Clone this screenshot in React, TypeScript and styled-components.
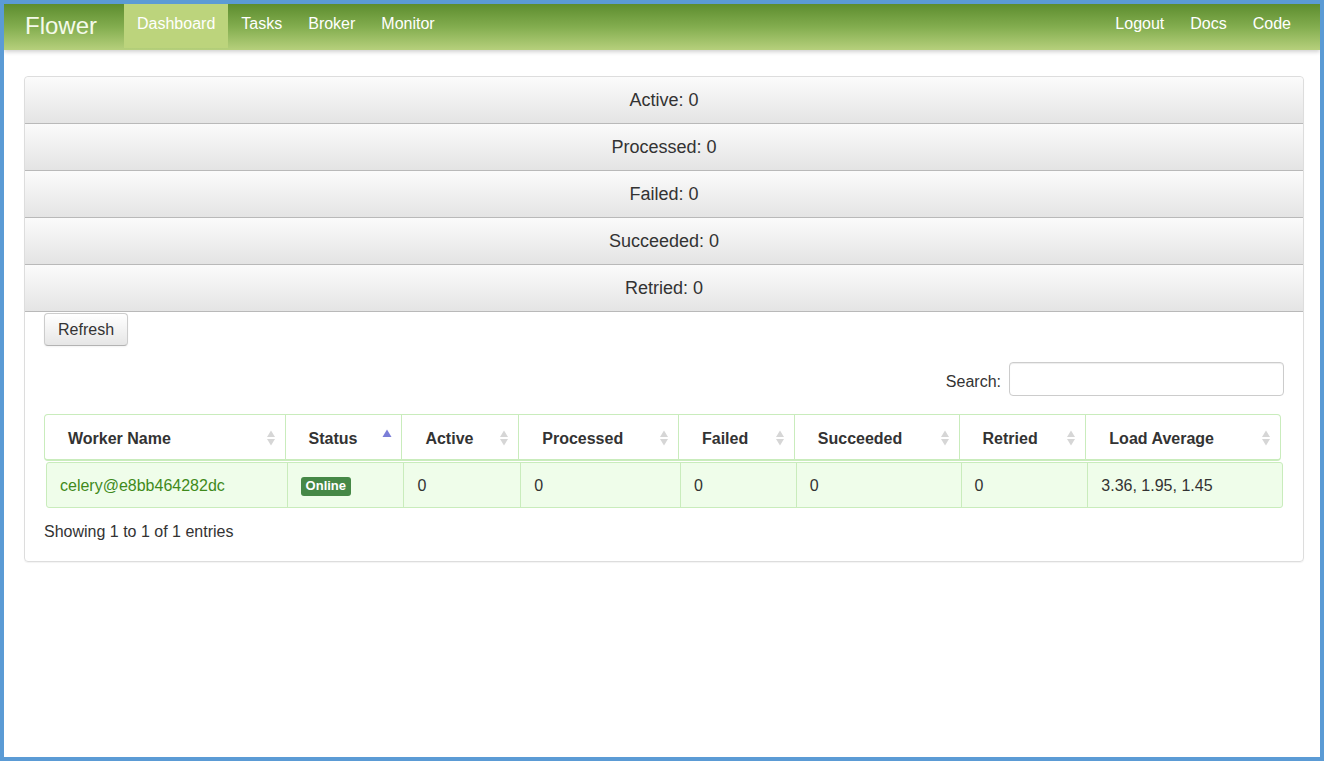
import React from "react";
import styled, { createGlobalStyle } from "styled-components";

const GlobalStyle = createGlobalStyle`
    html, body {
        margin: 0;
        padding: 0;
        background: #ffffff;
        font-family: "Liberation Sans", Arial, sans-serif;
        color: #333333;
    }
`;

interface IStat {
    label: string;
    value: number;
}

interface IColumn {
    title: string;
    width: number;
    sorted?: boolean;
}

const stats: IStat[] = [
    { label: "Active", value: 0 },
    { label: "Processed", value: 0 },
    { label: "Failed", value: 0 },
    { label: "Succeeded", value: 0 },
    { label: "Retried", value: 0 },
];

const columns: IColumn[] = [
    { title: "Worker Name", width: 241 },
    { title: "Status", width: 117, sorted: true },
    { title: "Active", width: 117 },
    { title: "Processed", width: 160 },
    { title: "Failed", width: 116 },
    { title: "Succeeded", width: 165 },
    { title: "Retried", width: 127 },
    { title: "Load Average", width: 194 },
];

const SortIcon: React.FC<{ sorted?: boolean }> = ({ sorted }) => {
    if (sorted) {
        return (
            <SortSvg width="10" height="20" viewBox="0 0 10 20">
                <path d="M0.5 9 L5 1.5 L9.5 9 Z" fill="#7b7ed8" />
            </SortSvg>
        );
    }
    return (
        <SortSvg width="10" height="20" viewBox="0 0 10 20">
            <path d="M1 9 L5 2.5 L9 9 Z" fill="#d6d6d6" />
            <path d="M1 11 L5 17.5 L9 11 Z" fill="#d6d6d6" />
        </SortSvg>
    );
};

const App: React.FC = () => {
    return (
        <>
            <GlobalStyle />
            <Frame>
                <NavBar>
                    <NavLeft>
                        <Brand>Flower</Brand>
                        <NavLink $active>Dashboard</NavLink>
                        <NavLink>Tasks</NavLink>
                        <NavLink>Broker</NavLink>
                        <NavLink>Monitor</NavLink>
                    </NavLeft>
                    <NavRight>
                        <NavLink>Logout</NavLink>
                        <NavLink>Docs</NavLink>
                        <NavLink>Code</NavLink>
                    </NavRight>
                </NavBar>
                <Content>
                    <Panel>
                        {stats.map((stat, i) => (
                            <StatButton key={stat.label} $first={i === 0}>
                                {stat.label}: {stat.value}
                            </StatButton>
                        ))}
                        <PanelBody>
                            <RefreshBtn>Refresh</RefreshBtn>
                            <SearchRow>
                                <SearchLabel>Search:</SearchLabel>
                                <SearchInput type="text" />
                            </SearchRow>
                            <Table>
                                <HeadRow>
                                    {columns.map((col) => (
                                        <HeadCell key={col.title} style={{ width: col.width }}>
                                            <span>{col.title}</span>
                                            <SortIcon sorted={col.sorted} />
                                        </HeadCell>
                                    ))}
                                </HeadRow>
                                <BodyRow>
                                    <BodyCell style={{ width: columns[0].width }}>
                                        <WorkerLink>celery@e8bb464282dc</WorkerLink>
                                    </BodyCell>
                                    <BodyCell style={{ width: columns[1].width }}>
                                        <Badge>Online</Badge>
                                    </BodyCell>
                                    <BodyCell style={{ width: columns[2].width }}>0</BodyCell>
                                    <BodyCell style={{ width: columns[3].width }}>0</BodyCell>
                                    <BodyCell style={{ width: columns[4].width }}>0</BodyCell>
                                    <BodyCell style={{ width: columns[5].width }}>0</BodyCell>
                                    <BodyCell style={{ width: columns[6].width }}>0</BodyCell>
                                    <BodyCell style={{ width: columns[7].width }}>3.36, 1.95, 1.45</BodyCell>
                                </BodyRow>
                            </Table>
                            <Info>Showing 1 to 1 of 1 entries</Info>
                        </PanelBody>
                    </Panel>
                </Content>
            </Frame>
        </>
    );
};

export default App;

const Frame = styled.div`
    box-sizing: border-box;
    width: 1324px;
    height: 761px;
    border: 4px solid #5b9bd5;
    background: #ffffff;
    overflow: hidden;
`;

const NavBar = styled.div`
    display: flex;
    justify-content: space-between;
    align-items: stretch;
    height: 46px;
    background: linear-gradient(to bottom, #5d8d2f 0%, #83ad4f 50%, #b6d07c 100%);
    box-shadow: 0 2px 4px rgba(0, 0, 0, 0.18);
    position: relative;
`;

const NavLeft = styled.div`
    display: flex;
    align-items: stretch;
    padding-left: 21px;
`;

const NavRight = styled.div`
    display: flex;
    align-items: stretch;
    padding-right: 16px;
`;

const Brand = styled.div`
    display: flex;
    align-items: center;
    font-size: 24px;
    color: #f4faea;
    margin-right: 27px;
    padding-bottom: 2px;
`;

const NavLink = styled.div<{ $active?: boolean }>`
    display: flex;
    align-items: center;
    padding: 0 13px 4px;
    margin-bottom: 2px;
    font-size: 16px;
    color: #ffffff;
    background: ${({ $active }) => ($active ? "#bcd47c" : "transparent")};
`;

const Content = styled.div`
    padding: 26px 16px 0 20px;
`;

const Panel = styled.div`
    border: 1px solid #dddddd;
    border-radius: 4px;
    overflow: hidden;
    box-shadow: 0 1px 1px rgba(0, 0, 0, 0.05);
`;

const StatButton = styled.div<{ $first?: boolean }>`
    display: flex;
    align-items: center;
    justify-content: center;
    height: 46px;
    border-bottom: 1px solid #b9b9b9;
    background: linear-gradient(to bottom, #fbfbfb 0%, #e4e4e4 100%);
    font-size: 18px;
    color: #333333;
    border-top-left-radius: ${({ $first }) => ($first ? "4px" : "0")};
    border-top-right-radius: ${({ $first }) => ($first ? "4px" : "0")};
`;

const PanelBody = styled.div`
    display: flex;
    flex-direction: column;
    padding: 1px 19px 20px 19px;
`;

const RefreshBtn = styled.button`
    align-self: flex-start;
    height: 33px;
    padding: 0 13px;
    font-family: "Liberation Sans", Arial, sans-serif;
    font-size: 16px;
    color: #333333;
    background: linear-gradient(to bottom, #ffffff 0%, #e6e6e6 100%);
    border: 1px solid #cccccc;
    border-bottom-color: #b3b3b3;
    border-radius: 4px;
    box-shadow: inset 0 1px 0 rgba(255, 255, 255, 0.2), 0 1px 2px rgba(0, 0, 0, 0.05);
    cursor: pointer;
`;

const SearchRow = styled.div`
    display: flex;
    justify-content: flex-end;
    align-items: center;
    gap: 8px;
    margin-top: 16px;
`;

const SearchLabel = styled.label`
    font-size: 16px;
    color: #333333;
    padding-top: 6px;
`;

const SearchInput = styled.input`
    box-sizing: border-box;
    width: 275px;
    height: 34px;
    border: 1px solid #cccccc;
    border-radius: 4px;
    box-shadow: inset 0 1px 1px rgba(0, 0, 0, 0.075);
    outline: none;
`;

const Table = styled.div`
    display: flex;
    flex-direction: column;
    margin-top: 18px;
    width: 1240px;
`;

const HeadRow = styled.div`
    display: flex;
    height: 47px;
    box-sizing: border-box;
    width: 1237px;
    border: 1px solid #c9ecbc;
    border-bottom: 2px solid #c9ecbc;
    border-radius: 4px;
    background: #ffffff;
`;

const HeadCell = styled.div`
    box-sizing: border-box;
    display: flex;
    align-items: center;
    justify-content: space-between;
    padding: 3px 9px 0 23px;
    font-size: 16px;
    font-weight: bold;
    color: #333333;
    border-right: 1px solid #c9ecbc;
    &:last-child {
        border-right: none;
    }
`;

const SortSvg = styled.svg`
    flex-shrink: 0;
    margin-top: -2px;
`;

const BodyRow = styled.div`
    display: flex;
    height: 46px;
    box-sizing: border-box;
    width: 1237px;
    margin-left: 2px;
    margin-top: 1px;
    border: 1px solid #c9ecbc;
    border-radius: 3px;
    background: #effdea;
`;

const BodyCell = styled.div`
    box-sizing: border-box;
    display: flex;
    align-items: center;
    padding: 2px 13px 0;
    font-size: 16px;
    color: #333333;
    border-right: 1px solid #c9ecbc;
    &:last-child {
        border-right: none;
    }
`;

const WorkerLink = styled.a`
    color: #3f8a1b;
    text-decoration: none;
    cursor: pointer;
`;

const Badge = styled.span`
    display: inline-block;
    padding: 2px 5px 3px;
    font-size: 13px;
    font-weight: bold;
    line-height: 14px;
    color: #ffffff;
    background: #468847;
    border-radius: 3px;
`;

const Info = styled.div`
    margin-top: 15px;
    font-size: 16px;
    color: #333333;
`;
